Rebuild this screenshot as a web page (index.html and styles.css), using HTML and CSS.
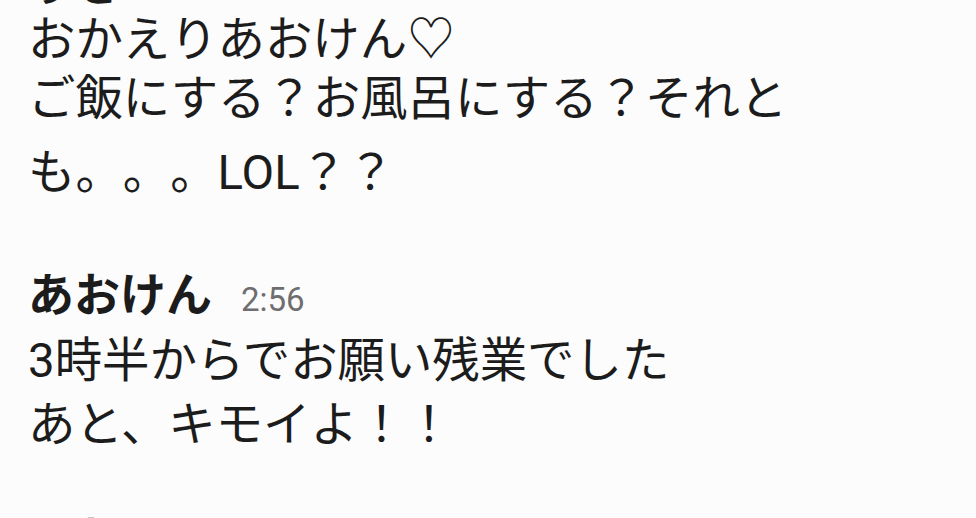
FILE: index.html
```html
<!DOCTYPE html>
<html lang="ja">
<head>
<meta charset="utf-8">
<link rel="stylesheet" href="styles.css">
</head>
<body>
<main class="feed">
  <section class="msg msg-prev">
    <p class="line">りさ</p>
  </section>
  <section class="msg msg-first">
    <p class="line">おかえりあおけん♡</p>
    <p class="line line-2">ご飯にする？お風呂にする？それと</p>
    <p class="line line-3">も。。。LOL？？</p>
  </section>
  <section class="msg msg-second">
    <header class="head">
      <span class="name">あおけん</span>
      <span class="time">2:56</span>
    </header>
    <p class="line line-4">3時半からでお願い残業でした</p>
    <p class="line line-5">あと、キモイよ！！</p>
  </section>
  <section class="msg msg-next">
    <header class="head">
      <span class="name">あおけん</span>
      <span class="time">3:01</span>
    </header>
  </section>
</main>
</body>
</html>
```

FILE: styles.css
```css
html, body {
  margin: 0;
  padding: 0;
  height: 100%;
  overflow: hidden;
  background: #fcfcfc;
}

body {
  font-family: Roboto, "Noto Sans CJK JP", sans-serif;
  color: #1d1c1d;
  text-spacing-trim: space-all;
}

.feed {
  padding-left: 28px;
  margin-top: -41px;
}

.line {
  margin: 0;
  font-size: 47.4px;
  line-height: 52px;
  white-space: nowrap;
  text-spacing-trim: space-all;
}

.msg-first {
  margin-top: 3px;
}

.line-2 {
  margin-top: 7px;
}

.line-3 {
  margin-top: 22px;
}

.msg-second {
  margin-top: 70px;
}

.head {
  display: flex;
  align-items: baseline;
  gap: 29px;
  height: 52px;
  line-height: 52px;
}

.name {
  font-size: 46px;
  font-weight: 700;
}

.time {
  font-size: 33px;
  color: #6e6e70;
}

.line-4 {
  margin-top: 14px;
}

.line-5 {
  margin-top: 12px;
}

.msg-next {
  margin-top: 62px;
}
```
